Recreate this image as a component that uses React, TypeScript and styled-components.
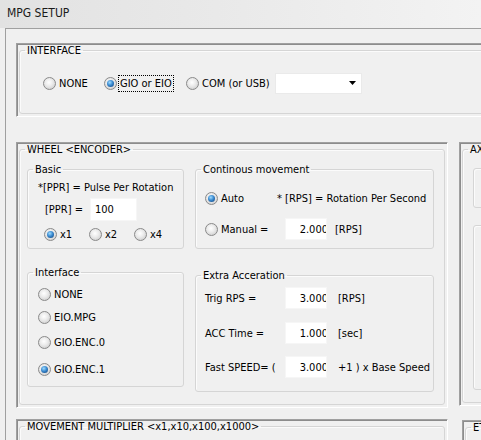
import React from 'react';
import styled, { createGlobalStyle } from 'styled-components';

const GlobalStyle = createGlobalStyle`
  html, body {
    margin: 0;
    padding: 0;
    background: #f0f0f0;
  }
  body {
    font-family: "DejaVu Sans Condensed", "DejaVu Sans", Tahoma, sans-serif;
    font-size: 11px;
    color: #000;
  }
`;

function Radio({ label, on, w, focus }: { label: string; on?: boolean; w?: number; focus?: boolean }) {
  return (
    <StyledRadio $w={w}>
      <RadioMark $on={on} />
      {focus ? <FocusText>{label}</FocusText> : <span>{label}</span>}
    </StyledRadio>
  );
}

function NumField({ value, w = 42 }: { value: string; w?: number }) {
  return (
    <Field $w={w} $right>
      <FieldText $clip>{value}</FieldText>
    </Field>
  );
}

function App() {
  return (
    <Window>
      <GlobalStyle />
      <TitleBar>MPG SETUP</TitleBar>
      <Frame>
        <Sunken $w={520} $h={74}>
          <GroupBox>
            <Caption>INTERFACE</Caption>
            <Body $h={56} $pt={16} $pl={23}>
              <Line $h={20}>
                <Radio label="NONE" w={61} />
                <Radio label="GIO or EIO" w={82} on focus />
                <Radio label="COM (or USB)" w={89} />
                <Combo>
                  <svg width="7" height="4" viewBox="0 0 7 4">
                    <path d="M0 0h7L3.5 4z" fill="#000" />
                  </svg>
                </Combo>
              </Line>
            </Body>
          </GroupBox>
        </Sunken>

        <PanelRow $mt={25}>
          <Sunken $w={432} $h={266}>
            <GroupBox $fill>
              <Caption>WHEEL &lt;ENCODER&gt;</Caption>
              <WheelGrid>
                <Column $gap={17}>
                  <GroupBox>
                    <Caption>Basic</Caption>
                    <Body $pt={4} $pl={10} $pb={6} $gap={4}>
                      <Line $h={14}>*[PPR] = Pulse Per Rotation</Line>
                      <Line $h={23} $pl={7}>
                        <Label $w={45}>[PPR] =</Label>
                        <Field $w={47} $h={23}>
                          <FieldText>100</FieldText>
                        </Field>
                      </Line>
                      <Line $h={16} $pl={6} $mt={1}>
                        <Radio label="x1" w={45} on />
                        <Radio label="x2" w={45} />
                        <Radio label="x4" w={45} />
                      </Line>
                    </Body>
                  </GroupBox>
                  <GroupBox>
                    <Caption>Interface</Caption>
                    <Body $pt={7} $pl={10} $pb={9}>
                      <Line $h={16}>
                        <Radio label="NONE" />
                      </Line>
                      <Line $h={16} $mt={7}>
                        <Radio label="EIO.MPG" />
                      </Line>
                      <Line $h={16} $mt={9}>
                        <Radio label="GIO.ENC.0" />
                      </Line>
                      <Line $h={16} $mt={11}>
                        <Radio label="GIO.ENC.1" on />
                      </Line>
                    </Body>
                  </GroupBox>
                </Column>

                <Column $gap={20}>
                  <GroupBox>
                    <Caption>Continous movement</Caption>
                    <Body $pt={14} $pl={9} $pb={8} $gap={12}>
                      <Line $h={16}>
                        <Radio label="Auto" w={72} on />
                        <span>* [RPS] = Rotation Per Second</span>
                      </Line>
                      <Line $h={22}>
                        <Radio label="Manual =" w={80} />
                        <NumField value="2.000" />
                        <Unit $ml={8}>[RPS]</Unit>
                      </Line>
                    </Body>
                  </GroupBox>
                  <GroupBox>
                    <Caption>Extra Acceration</Caption>
                    <Body $pt={5} $pl={9} $pb={13}>
                      <Line $h={22}>
                        <Label $w={80}>Trig RPS =</Label>
                        <NumField value="3.000" />
                        <Unit $ml={11}>[RPS]</Unit>
                      </Line>
                      <Line $h={22} $mt={13}>
                        <Label $w={80}>ACC Time =</Label>
                        <NumField value="1.000" />
                        <Unit $ml={11}>[sec]</Unit>
                      </Line>
                      <Line $h={22} $mt={12}>
                        <Label $w={80}>Fast SPEED= (</Label>
                        <NumField value="3.000" />
                        <Unit $ml={11}>+1 ) x Base Speed</Unit>
                      </Line>
                    </Body>
                  </GroupBox>
                </Column>
              </WheelGrid>
            </GroupBox>
          </Sunken>

          <Sunken $w={200} $h={264} $ml={11}>
            <GroupBox $fill>
              <Caption>AXIS</Caption>
              <Body $pt={12} $pl={10} $gap={17}>
                <InnerBox $h={38} />
                <InnerBox $h={163} />
              </Body>
            </GroupBox>
          </Sunken>
        </PanelRow>

        <PanelRow $mt={11}>
          <Sunken $w={432} $h={60}>
            <GroupBox $fill>
              <Caption>MOVEMENT MULTIPLIER &lt;x1,x10,x100,x1000&gt;</Caption>
            </GroupBox>
          </Sunken>
          <Sunken $w={200} $h={60} $ml={14} $mt={1}>
            <GroupBox $fill>
              <Caption>ETC</Caption>
            </GroupBox>
          </Sunken>
        </PanelRow>
      </Frame>
    </Window>
  );
}

const Window = styled.div`
  width: 481px;
  height: 440px;
  overflow: hidden;
  display: flex;
  flex-direction: column;
  background: #f0f0f0;
`;

const TitleBar = styled.div`
  flex: none;
  height: 28px;
  box-sizing: border-box;
  display: flex;
  align-items: center;
  padding: 0 0 2px 7px;
  background: linear-gradient(to right, #e2e2e2 0%, #e9e9e9 45%, #f3f3f3 100%);
  font-size: 12px;
  color: #1a1a1a;
`;

const Frame = styled.div`
  flex: 1;
  margin-left: 5px;
  padding: 14px 0 0 10px;
  border-top: 1px solid #a0a0a0;
  border-left: 1px solid #a0a0a0;
  display: flex;
  flex-direction: column;
`;

const PanelRow = styled.div<{ $mt: number }>`
  display: flex;
  align-items: flex-start;
  margin-top: ${({ $mt }) => $mt}px;
`;

const Sunken = styled.div<{ $w: number; $h: number; $ml?: number; $mt?: number }>`
  flex: none;
  box-sizing: border-box;
  width: ${({ $w }) => $w}px;
  height: ${({ $h }) => $h}px;
  margin-left: ${({ $ml = 0 }) => $ml}px;
  margin-top: ${({ $mt = 0 }) => $mt}px;
  padding: 0 2px 2px 2px;
  border-top: 1px solid #a0a0a0;
  border-left: 1px solid #a0a0a0;
  border-right: 1px solid #ffffff;
  border-bottom: 1px solid #ffffff;
  box-shadow: inset 1px 1px 0 #8c8c8c;
  display: flex;
  flex-direction: column;
`;

const GroupBox = styled.fieldset<{ $fill?: boolean }>`
  margin: 0;
  padding: 0;
  min-width: 0;
  box-sizing: border-box;
  border: 1px solid #d5d5d5;
  border-radius: 3px;
  box-shadow: inset 1px 1px 0 #fbfbfb;
  flex: ${({ $fill }) => ($fill ? 1 : 'none')};
`;

const Caption = styled.legend`
  margin-left: 5px;
  padding: 0 2px;
  font-size: 11px;
  line-height: 13px;
  white-space: nowrap;
`;

const Body = styled.div<{ $h?: number; $pt?: number; $pl?: number; $pb?: number; $gap?: number }>`
  box-sizing: border-box;
  ${({ $h }) => ($h ? `height: ${$h}px;` : '')}
  padding: ${({ $pt = 0 }) => $pt}px 0 ${({ $pb = 0 }) => $pb}px ${({ $pl = 0 }) => $pl}px;
  display: flex;
  flex-direction: column;
  gap: ${({ $gap = 0 }) => $gap}px;
`;

const WheelGrid = styled.div`
  display: grid;
  grid-template-columns: 157px 239px;
  column-gap: 11px;
  align-items: start;
  padding: 7px 0 0 7px;
`;

const Column = styled.div<{ $gap: number }>`
  display: flex;
  flex-direction: column;
  gap: ${({ $gap }) => $gap}px;
`;

const Line = styled.div<{ $h: number; $pl?: number; $mt?: number }>`
  height: ${({ $h }) => $h}px;
  display: flex;
  align-items: center;
  padding-left: ${({ $pl = 0 }) => $pl}px;
  margin-top: ${({ $mt = 0 }) => $mt}px;
  white-space: nowrap;
`;

const Label = styled.span<{ $w: number }>`
  flex: none;
  width: ${({ $w }) => $w}px;
`;

const Unit = styled.span<{ $ml: number }>`
  margin-left: ${({ $ml }) => $ml}px;
`;

const Field = styled.div<{ $w: number; $h?: number; $right?: boolean }>`
  flex: none;
  box-sizing: border-box;
  width: ${({ $w }) => $w}px;
  height: ${({ $h = 22 }) => $h}px;
  background: #fff;
  border: 1px solid #f6f6f6;
  display: flex;
  align-items: center;
  justify-content: ${({ $right }) => ($right ? 'flex-end' : 'flex-start')};
  padding-left: ${({ $right }) => ($right ? 0 : 4)}px;
  overflow: hidden;
`;

const FieldText = styled.span<{ $clip?: boolean }>`
  margin-right: ${({ $clip }) => ($clip ? -2 : 0)}px;
`;

const StyledRadio = styled.label<{ $w?: number }>`
  flex: none;
  display: inline-flex;
  align-items: center;
  gap: 3px;
  ${({ $w }) => ($w ? `width: ${$w}px;` : '')}
`;

const RadioMark = styled.span<{ $on?: boolean }>`
  flex: none;
  box-sizing: border-box;
  width: 13px;
  height: 13px;
  border-radius: 50%;
  border: 1px solid #8a8a8a;
  background: radial-gradient(circle at 45% 40%, #ffffff 0%, #ececec 40%, #c4c4c4 100%);
  display: inline-flex;
  align-items: center;
  justify-content: center;

  &::after {
    content: '';
    display: ${({ $on }) => ($on ? 'block' : 'none')};
    width: 7px;
    height: 7px;
    border-radius: 50%;
    background: radial-gradient(circle at 40% 35%, #9fdcff 0%, #3a8ad0 45%, #0d3a70 100%);
  }
`;

const FocusText = styled.span`
  outline: 1px dotted #000;
  outline-offset: 1px;
`;

const Combo = styled.div`
  flex: none;
  box-sizing: border-box;
  width: 87px;
  height: 21px;
  background: #fff;
  border: 1px solid #eaeaea;
  display: flex;
  align-items: center;
  justify-content: flex-end;
  padding-right: 5px;
`;

const InnerBox = styled.div<{ $h: number }>`
  flex: none;
  height: ${({ $h }) => $h}px;
  border: 1px solid #d5d5d5;
  border-radius: 3px;
  box-shadow: inset 1px 1px 0 #fbfbfb;
`;

export default App;
